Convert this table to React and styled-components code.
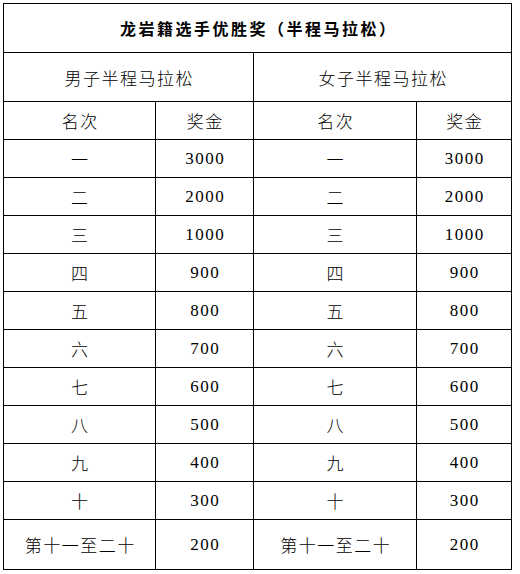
import React from "react";
import styled, { createGlobalStyle } from "styled-components";

const Global = createGlobalStyle`
  html, body { margin: 0; padding: 0; background: #fff; }
  body { padding: 3px; }
`;

const Grid = styled.div`
  display: grid;
  grid-template-columns: 151px 97px 162px 94px;
  grid-template-rows: 48px 48px repeat(11, 37px) 49px;
  gap: 1px;
  padding: 1px;
  background: #000;
  width: max-content;
  font-family: "Liberation Serif", "Noto Sans CJK SC", serif;
  color: #000;
`;

const Cell = styled.div`
  background: #fff;
  display: flex;
  align-items: center;
  justify-content: center;
  grid-column: span ${(p) => p.$span || 1};
  font-size: ${(p) => (p.$title ? "16px" : "17px")};
  font-weight: ${(p) => (p.$title ? 700 : 300)};
  letter-spacing: ${(p) => (p.$title ? "2.5px" : "1.5px")};
  padding-left: ${(p) => (p.$title ? "2.5px" : "1.5px")};
  white-space: nowrap;
`;

const rows = [
  ["一", "3000"],
  ["二", "2000"],
  ["三", "1000"],
  ["四", "900"],
  ["五", "800"],
  ["六", "700"],
  ["七", "600"],
  ["八", "500"],
  ["九", "400"],
  ["十", "300"],
  ["第十一至二十", "200"],
];

export default function App() {
  return (
    <>
      <Global />
      <Grid>
        <Cell $span={4} $title>龙岩籍选手优胜奖（半程马拉松）</Cell>
        <Cell $span={2}>男子半程马拉松</Cell>
        <Cell $span={2}>女子半程马拉松</Cell>
        <Cell>名次</Cell>
        <Cell>奖金</Cell>
        <Cell>名次</Cell>
        <Cell>奖金</Cell>
        {rows.map(([rank, prize]) => (
          <React.Fragment key={rank}>
            <Cell>{rank}</Cell>
            <Cell>{prize}</Cell>
            <Cell>{rank}</Cell>
            <Cell>{prize}</Cell>
          </React.Fragment>
        ))}
      </Grid>
    </>
  );
}
